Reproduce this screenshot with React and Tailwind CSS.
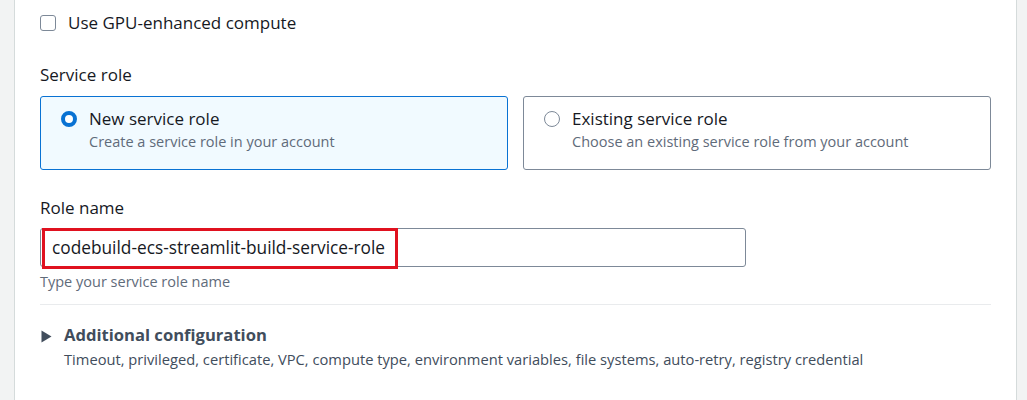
export default function App() {
    return (
        <div className="flex h-[400px] w-[1027px] overflow-hidden bg-white font-['Open_Sans',sans-serif] text-[#16191f]">
            {/* left gutter */}
            <div className="w-[15px] shrink-0 border-r border-[#d5dbdb] bg-[#f2f3f3]" />

            <div className="flex-1 pl-[25px] pr-[25px]">
                {/* GPU checkbox */}
                <label className="mt-[14px] flex h-[18px] items-center gap-[12px]">
                    <span className="h-[16px] w-[16px] rounded-[3px] border-[1.5px] border-[#7d8998] bg-white" />
                    <span className="text-[17px] leading-[18px]">Use GPU-enhanced compute</span>
                </label>

                {/* Service role */}
                <p className="mt-[33px] text-[17px] leading-[20px]">Service role</p>
                <div className="mt-[11px] grid grid-cols-2 gap-[15px]">
                    <div className="h-[74px] rounded-[3px] border border-[#0972d3] bg-[#f1faff] px-[20px] pt-[11px]">
                        <div className="flex items-center gap-[12px]">
                            <span className="h-[16px] w-[16px] rounded-full border-[4.5px] border-[#0972d3] bg-white" />
                            <span className="text-[17px] leading-[22px]">New service role</span>
                        </div>
                        <p className="ml-[28px] mt-[2px] text-[14.5px] leading-[20px] text-[#5f6b7a]">Create a service role in your account</p>
                    </div>
                    <div className="h-[74px] rounded-[3px] border border-[#7d8998] bg-white px-[20px] pt-[11px]">
                        <div className="flex items-center gap-[12px]">
                            <span className="h-[16px] w-[16px] rounded-full border-[1.5px] border-[#7d8998] bg-white" />
                            <span className="text-[17px] leading-[22px]">Existing service role</span>
                        </div>
                        <p className="ml-[28px] mt-[2px] text-[14.5px] leading-[20px] text-[#5f6b7a]">Choose an existing service role from your account</p>
                    </div>
                </div>

                {/* Role name */}
                <p className="mt-[27px] text-[17px] leading-[22px]">Role name</p>
                <div className="relative mt-[9px] w-[706px]">
                    <div className="flex h-[39px] items-center rounded-[3px] border border-[#7d8998] pl-[11px] text-[17.3px]">
                        codebuild-ecs-streamlit-build-service-role
                    </div>
                    {/* annotation box */}
                    <div className="absolute left-[2px] top-[0px] h-[41px] w-[356px] border-[3px] border-[#e0111f]" />
                </div>
                <p className="mt-[5px] text-[14.5px] leading-[20px] text-[#5f6b7a]">Type your service role name</p>

                <div className="mt-[12px] border-t border-[#e9ebed]" />

                {/* Additional configuration */}
                <div className="mt-[19px] flex items-center gap-[12px]">
                    <svg width="11" height="13" viewBox="0 0 11 13" className="ml-[1px] mt-[2px] shrink-0">
                        <path d="M0.5 0.5 L10.5 6.5 L0.5 12.5 Z" fill="#414d5c" />
                    </svg>
                    <span className="text-[16.6px] font-bold leading-[22px] text-[#414d5c]">Additional configuration</span>
                </div>
                <p className="ml-[24px] mt-[3px] text-[14.7px] leading-[20px] text-[#414d5c]">
                    Timeout, privileged, certificate, VPC, compute type, environment variables, file systems, auto-retry, registry credential
                </p>
            </div>

            {/* right gutter */}
            <div className="w-[11px] shrink-0 border-l border-[#d5dbdb] bg-[#f2f3f3]" />
        </div>
    );
}
